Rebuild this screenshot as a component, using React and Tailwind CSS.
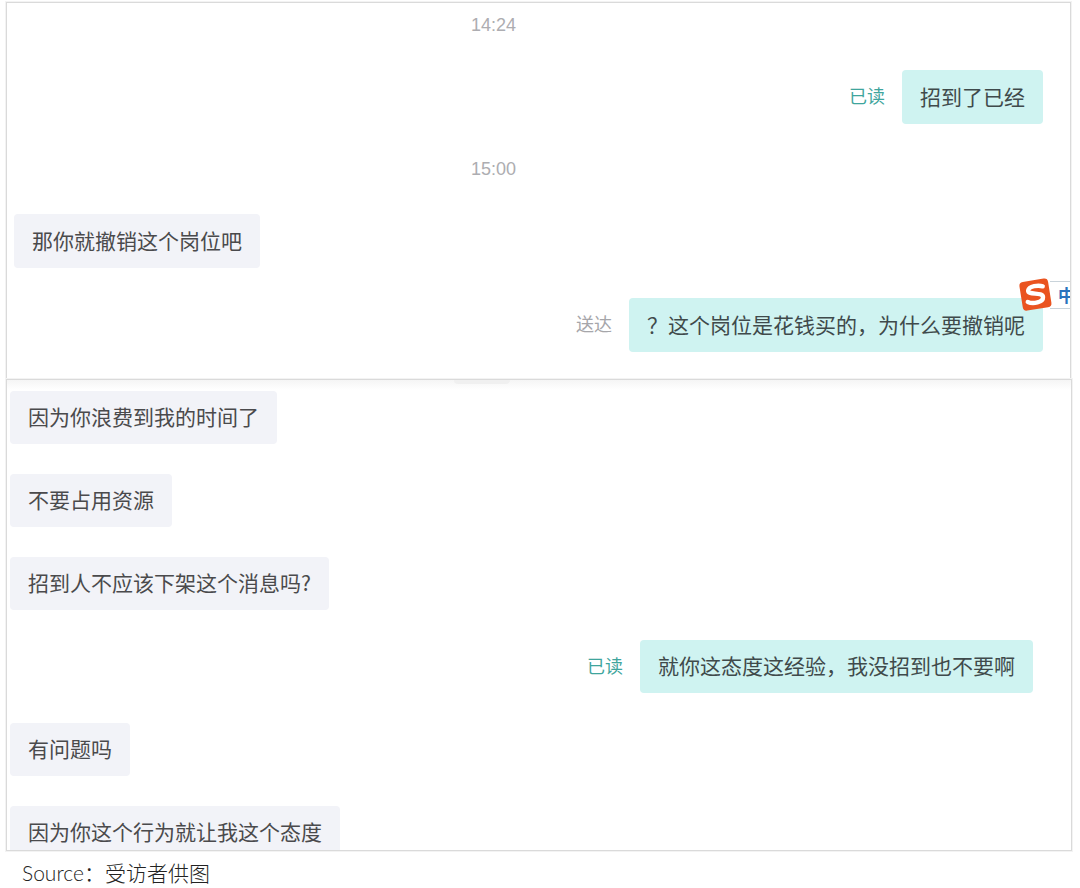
function Status({ children, read }) {
  return (
    <span className={read ? "pb-1 text-lg leading-7 text-[#3fa59d]" : "pb-1 text-lg leading-7 text-[#a6a6aa]"}>
      {children}
    </span>
  );
}

function Received({ children }) {
  return (
    <li className="flex">
      <p className="rounded bg-[#f2f3f8] px-[18px] pt-[11px] pb-[13px] text-[#4a4a4c]">{children}</p>
    </li>
  );
}

function Sent({ status, read, children }) {
  return (
    <li className="flex items-center justify-end gap-[17px]">
      <Status read={read}>{status}</Status>
      <p className="rounded bg-[#cff3f1] px-[18px] pt-[11px] pb-[13px] text-[#3f4a4b]">{children}</p>
    </li>
  );
}

function Time({ children }) {
  return (
    <li className="pr-[70px] text-center font-['Liberation_Sans',sans-serif] text-lg leading-[30px] text-[#adadb1]">
      <time className="block">{children}</time>
    </li>
  );
}

function InputMethodBadge() {
  return (
    <div className="absolute -right-px bottom-[66px] flex h-9 items-center">
      <svg viewBox="0 0 36 36" className="relative z-10 h-9 w-9" aria-hidden="true">
        <g transform="rotate(-9 18 18)">
          <rect x="3" y="3" width="29" height="29" rx="4" fill="#ea5420" />
          <path
            d="M26 10.5C22 8.4 12.5 8 11 12.2C9.6 17.4 25.2 15.6 24.6 21.2C24 26.6 13.5 26.6 8.8 23.6"
            fill="none"
            stroke="#fff"
            strokeWidth="4.4"
            strokeLinecap="round"
          />
        </g>
      </svg>
      <span className="-ml-1 h-7 w-[21px] overflow-hidden border-y border-[#c9d3da] bg-white pl-2 text-[17px] leading-[26px] font-bold text-[#2a73bd]">
        中
      </span>
    </div>
  );
}

export default function App() {
  return (
    <main className="bg-white pt-0.5 pr-2 pb-1 pl-1.5 font-['Noto_Sans_CJK_SC',sans-serif] text-[21px]">
      <figure>
        <section className="relative mr-px overflow-hidden border border-b-0 border-[#dadada] pt-[7px] pr-[27px] pb-[27px] pl-[7px] leading-[30px] shadow-[0_0_0_1px_#f3f3f3]">
          <ul className="flex flex-col gap-[30px]">
            <Time>14:24</Time>
            <Sent status="已读" read>招到了已经</Sent>
            <Time>15:00</Time>
            <Received>那你就撤销这个岗位吧</Received>
            <Sent status="送达">？这个岗位是花钱买的，为什么要撤销呢</Sent>
          </ul>
          <InputMethodBadge />
        </section>
        <section className="relative overflow-hidden border border-[#dadada] bg-linear-to-b from-[#f5f5f5] to-white to-[10px] pt-[11px] pr-[38px] pl-[3px] leading-[29px] shadow-[0_0_0_1px_#f3f3f3]">
          <div className="absolute top-0 left-[42%] h-1 w-14 rounded-b bg-[#f0f0f0]" />
          <ul className="relative -mb-[9px] flex flex-col gap-[30px]">
            <Received>因为你浪费到我的时间了</Received>
            <Received>不要占用资源</Received>
            <Received>招到人不应该下架这个消息吗?</Received>
            <Sent status="已读" read>就你这态度这经验，我没招到也不要啊</Sent>
            <Received>有问题吗</Received>
            <Received>因为你这个行为就让我这个态度</Received>
          </ul>
        </section>
        <figcaption className="px-4 pt-2 font-['Lato','Noto_Sans_CJK_SC',sans-serif] leading-7 font-light text-[#222]">
          Source：受访者供图
        </figcaption>
      </figure>
    </main>
  );
}
